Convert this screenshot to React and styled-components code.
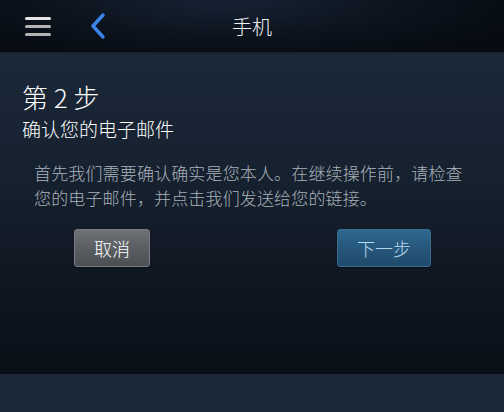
import React from 'react';
import styled, { createGlobalStyle } from 'styled-components';

const Global = createGlobalStyle`
html, body {
  margin: 0;
  padding: 0;
  background: #1b2838;
}
body {
  font-family: "Liberation Sans", "Noto Sans CJK SC", sans-serif;
}
`;

const Page = styled.div`
width: 504px;
height: 412px;
display: flex;
flex-direction: column;
overflow: hidden;
`;

const Header = styled.header`
height: 52px;
flex-shrink: 0;
display: flex;
align-items: center;
position: relative;
background: radial-gradient(ellipse 60% 120% at 45% 0%, #162234 0%, #0c131d 60%, #070c13 100%);
border-bottom: 2px solid #1a222d;
`;

const Burger = styled.div`
width: 26px;
margin-left: 25px;
display: flex;
flex-direction: column;
gap: 5px;
`;

const Bar = styled.span`
display: block;
height: 3px;
border-radius: 1.5px;
background: ${p => (p.light ? '#e6e6e6' : '#b3b3b3')};
`;

const Back = styled.svg`
margin-left: 38px;
width: 18px;
height: 26px;
`;

const Title = styled.h1`
position: absolute;
left: 0;
right: 0;
top: 0;
bottom: 0;
margin: 0;
display: flex;
align-items: center;
justify-content: center;
font-family: "Noto Sans CJK SC", sans-serif;
font-size: 20px;
font-weight: 300;
color: #f2f2f2;
pointer-events: none;
`;

const Panel = styled.main`
height: 320px;
flex-shrink: 0;
padding: 26px 10px 0 22px;
box-sizing: border-box;
background: linear-gradient(180deg, #1b2839 0%, #16212f 40%, #0d141d 80%, #0a1018 100%);
border-bottom: 1px solid #070b10;
`;

const Step = styled.h2`
margin: 0;
font-family: "Noto Sans CJK SC", sans-serif;
font-size: 26px;
font-weight: 300;
line-height: 34px;
color: #ffffff;
`;

const Subtitle = styled.h3`
margin: 2px 0 0;
font-family: "Noto Sans CJK SC", sans-serif;
font-size: 19px;
font-weight: 300;
line-height: 26px;
color: #ffffff;
`;

const Message = styled.p`
margin: 18px 0 0 12px;
width: 440px;
font-family: "Noto Sans CJK SC", sans-serif;
font-size: 17px;
font-weight: 300;
line-height: 25px;
color: #a9b1ba;
letter-spacing: 0.15px;
`;

const Actions = styled.div`
display: flex;
justify-content: space-between;
margin: 19px 63px 0 52px;
`;

const Button = styled.button`
height: 38px;
width: ${p => p.w}px;
border-radius: 3px;
font-family: "Noto Sans CJK SC", sans-serif;
font-size: 18px;
font-weight: 300;
padding: 0;
cursor: pointer;
color: ${p => (p.primary ? '#b8d8f0' : '#ffffff')};
border: 1px solid ${p => (p.primary ? '#3a6d93' : '#7a7e83')};
background: ${p => (p.primary
  ? 'linear-gradient(180deg, #2f6890 0%, #26577b 50%, #1f4a6b 100%)'
  : 'linear-gradient(180deg, #6e7277 0%, #5b5f64 50%, #4b4f54 100%)')};
box-shadow: 0 1px 2px rgba(0, 0, 0, 0.4);
`;

const Footer = styled.footer`
flex: 1;
background: #1b2838;
`;

export default function App() {
  return (
    <>
      <Global />
      <Page lang="zh-CN">
        <Header>
          <Burger>
            <Bar light />
            <Bar />
            <Bar />
          </Burger>
          <Back viewBox="0 0 18 26">
            <path d="M14 2 L4 13 L14 24" fill="none" stroke="#3a85ea" strokeWidth="3.4" strokeLinecap="round" strokeLinejoin="round" />
          </Back>
          <Title>手机</Title>
        </Header>
        <Panel>
          <Step>第 2 步</Step>
          <Subtitle>确认您的电子邮件</Subtitle>
          <Message>
            首先我们需要确认确实是您本人。在继续操作前，请检查您的电子邮件，并点击我们发送给您的链接。
          </Message>
          <Actions>
            <Button w={76}>取消</Button>
            <Button w={94} primary>下一步</Button>
          </Actions>
        </Panel>
        <Footer />
      </Page>
    </>
  );
}
